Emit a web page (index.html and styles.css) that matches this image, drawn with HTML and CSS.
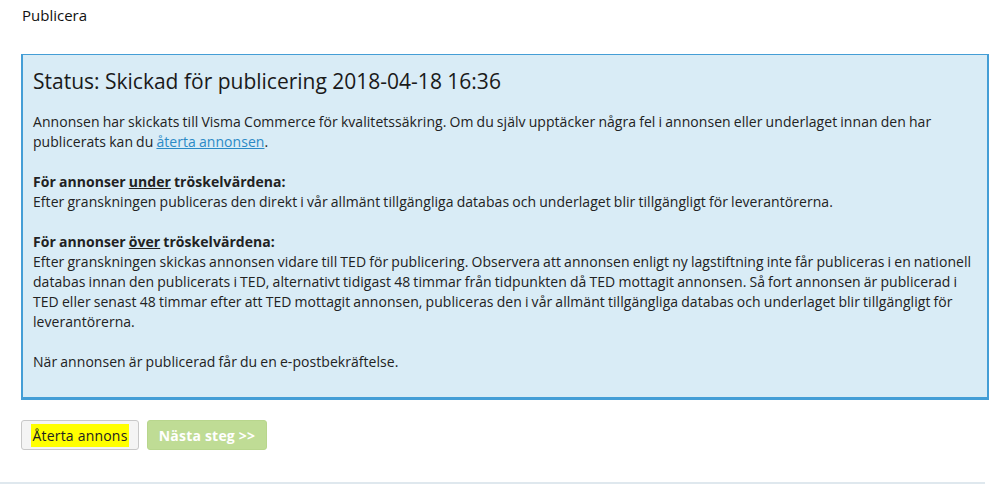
FILE: index.html
```html
<!DOCTYPE html>
<html lang="sv">
<head>
<meta charset="utf-8">
<title>Publicera</title>
<link rel="stylesheet" href="styles.css">
</head>
<body>
<div class="page">
  <div class="page-title">Publicera</div>
  <div class="status-box">
    <h2 class="status-title">Status: Skickad för publicering 2018-04-18 16:36</h2>
    <p>Annonsen har skickats till Visma Commerce för kvalitetssäkring. Om du själv upptäcker några fel i annonsen eller underlaget innan den har publicerats kan du <a href="#" class="link">återta annonsen</a>.</p>
    <p><b>För annonser <u>under</u> tröskelvärdena:</b><br>Efter granskningen publiceras den direkt i vår allmänt tillgängliga databas och underlaget blir tillgängligt för leverantörerna.</p>
    <p><b>För annonser <u>över</u> tröskelvärdena:</b><br>Efter granskningen skickas annonsen vidare till TED för publicering. Observera att annonsen enligt ny lagstiftning inte får publiceras i en nationell databas innan den publicerats i TED, alternativt tidigast 48 timmar från tidpunkten då TED mottagit annonsen. Så fort annonsen är publicerad i TED eller senast 48 timmar efter att TED mottagit annonsen, publiceras den i vår allmänt tillgängliga databas och underlaget blir tillgängligt för leverantörerna.</p>
    <p>När annonsen är publicerad får du en e-postbekräftelse.</p>
  </div>
  <div class="actions">
    <button class="btn btn-default"><span class="hl">Återta annons</span></button>
    <button class="btn btn-next">Nästa steg &gt;&gt;</button>
  </div>
</div>
<div class="footer-line"></div>
</body>
</html>
```
FILE: styles.css
```css
html, body {
  margin: 0;
  padding: 0;
  background: #fff;
}
body {
  font-family: "Open Sans", "DejaVu Sans", sans-serif;
  font-size: 14px;
  color: #222;
}
.page {
  padding: 5px 6px 0 21px;
}
.page-title {
  font-size: 15px;
  line-height: 20px;
  padding-left: 1px;
  color: #111;
}
.status-box {
  margin-top: 29px;
  background: #d9ecf6;
  border-style: solid;
  border-color: #449ed6;
  border-width: 1px 2px 3px 2px;
  padding: 13px 4px 15px 10px;
}
.status-title {
  font-size: 21px;
  font-weight: normal;
  line-height: 26px;
  margin: 0 0 18px 0;
  color: #1a1a1a;
}
.status-box p {
  margin: 0 0 20px 0;
  line-height: 20px;
  letter-spacing: 0.05px;
  word-spacing: -0.6px;
}
.status-box p:last-child {
  margin-bottom: 10px;
}
.link {
  color: #2b8ac6;
  text-decoration: underline;
}
.actions {
  display: flex;
  gap: 8px;
  margin-top: 20px;
}
.btn {
  font-family: "Open Sans", "DejaVu Sans", sans-serif;
  font-size: 14px;
  letter-spacing: 0.2px;
  height: 30px;
  border-radius: 3px;
  padding: 0 6px;
  cursor: pointer;
}
.btn-default {
  width: 118px;
  background: #f4f4f4;
  border: 1px solid #c8c8c8;
  color: #222;
}
.hl {
  background: #ffff00;
  padding: 2px 1px;
}
.btn-next {
  width: 120px;
  background: #bfdc95;
  border: 1px solid #b8d68d;
  color: #fff;
  font-weight: bold;
}
.footer-line {
  margin-top: 32px;
  height: 2px;
  background: #dfe8ee;
  margin-right: 10px;
}
```
